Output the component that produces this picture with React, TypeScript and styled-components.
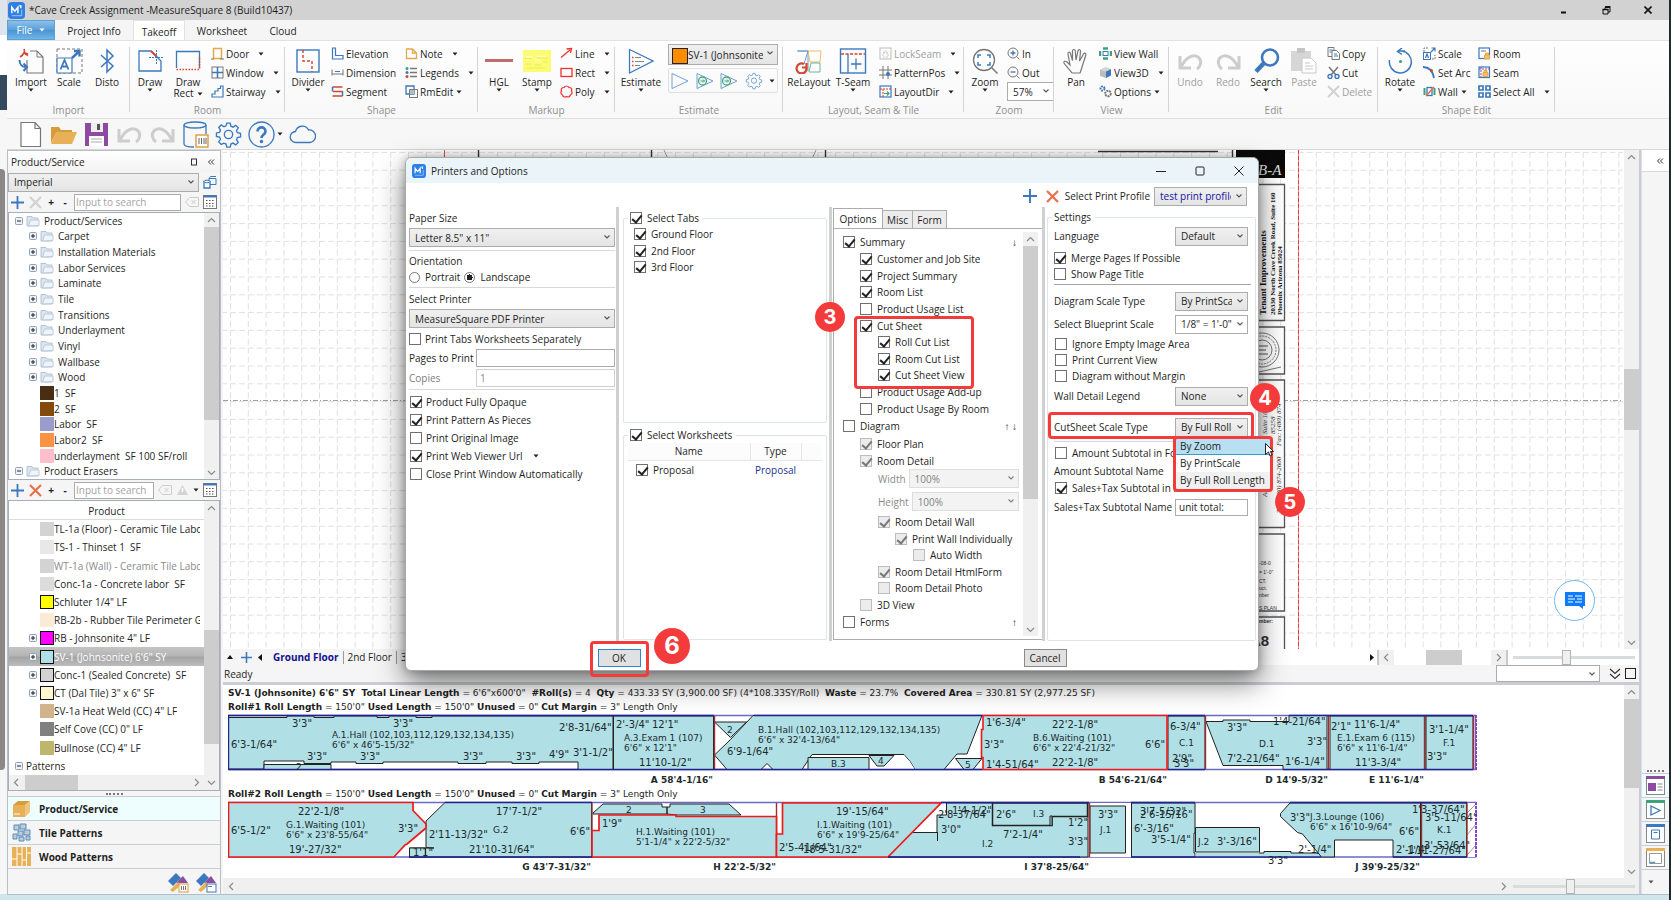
import React from 'react';
import styled, { createGlobalStyle, css } from 'styled-components';

const BLUE = '#3b78bd';
const RED = '#f43b3b';
const CUT = '#b0e0e6';

const GlobalStyle = createGlobalStyle`
  * { box-sizing: border-box; }
  body { margin: 0; background: #d0e6ec; }
  body, button, input, select, table {
    font-family: "Open Sans", "Noto Sans", sans-serif;
    font-size: 10px;
    line-height: 16px;
    color: #1e1e1e;
  }
  button { border: 0; padding: 0; background: none; white-space: nowrap; }
  svg { display: block; flex: none; }
`;

/* ---------- shell ---------- */

const Page = styled.div`
  position: relative;
  display: flex;
  height: 100vh;
  overflow: hidden;
`;
const Behind = styled.div`
  width: 7px;
  flex: none;
  display: flex;
  flex-direction: column;
  background: #f2f4f6;
`;
const BehindPart = styled.div<{ $h?: number; $c: string; $round?: boolean }>`
  ${p => (p.$h ? css`height: ${p.$h}px; flex: none;` : css`flex: 1;`)}
  background: ${p => p.$c};
  ${p => p.$round && css`margin-right: 2px; border-radius: 0 4px 4px 0;`}
`;
const AppWindow = styled.div`
  flex: 1;
  min-width: 0;
  display: flex;
  flex-direction: column;
  background: #f5f5f5;
  border-right: 2px solid #1d2a30;
`;
const TitleBar = styled.header`
  height: 20px;
  flex: none;
  display: flex;
  align-items: center;
  background: #d2d2d2;
  padding-left: 1px;
`;
const TitleText = styled.h1`
  margin: 0 0 0 4px;
  font-size: 10px;
  font-weight: 400;
  flex: 1;
`;
const WinButton = styled.button`
  width: 42px;
  height: 20px;
  display: flex;
  align-items: center;
  justify-content: center;
`;
const TabBar = styled.nav`
  height: 21px;
  flex: none;
  display: flex;
  align-items: flex-end;
  border-bottom: 1px solid #e2e2e2;
`;
const FileButton = styled.button`
  width: 48px;
  height: 20px;
  align-self: flex-start;
  display: flex;
  align-items: center;
  justify-content: center;
  gap: 7px;
  color: #fff;
  background: linear-gradient(#8cc0e8, #5b9fd8 50%, #4a94d4 52%, #6fb6e6);
  border: 1px solid #5fa0d4;
`;
const MenuTab = styled.button<{ $active?: boolean; $w: number }>`
  width: ${p => p.$w}px;
  height: 20px;
  padding-top: 2px;
  ${p => p.$active && css`
    background: #fff;
    border: 1px solid #e2e2e2;
    border-bottom: 0;
  `}
`;
const Ribbon = styled.div`
  height: 78px;
  flex: none;
  display: flex;
  background: linear-gradient(#fefefe, #f8f8f8);
  border-bottom: 1px solid #dedede;
`;
const Group = styled.section<{ $w: number; $pad: number }>`
  width: ${p => p.$w}px;
  flex: none;
  display: flex;
  flex-direction: column;
  padding: 3px 0 0 ${p => p.$pad}px;
  position: relative;
  &::after {
    content: "";
    position: absolute;
    right: 0;
    top: 6px;
    height: 65px;
    border-right: 1px solid #d4d4d4;
  }
`;
const GroupTools = styled.div`
  height: 58px;
  display: flex;
`;
const GroupLabel = styled.div<{ $pad: number }>`
  color: #8f8f8f;
  text-align: center;
  margin-left: -${p => p.$pad}px;
`;
const LargeButton = styled.button<{ $w?: number; $off?: boolean }>`
  width: ${p => p.$w ?? 38}px;
  height: 57px;
  display: flex;
  flex-direction: column;
  align-items: center;
  padding-top: 4px;
  line-height: 10px;
  color: ${p => (p.$off ? '#a0a0a0' : '#1e1e1e')};
  > svg:first-child { margin-bottom: 3px; }
`;
const LargeLabel = styled.span`
  display: block;
  line-height: 11px;
`;
const SmallColumn = styled.div<{ $w?: number }>`
  display: flex;
  flex-direction: column;
  margin-left: 4px;
  ${p => p.$w && css`width: ${p.$w - 4}px;`}
`;
const SmallButton = styled.button<{ $off?: boolean; $near?: boolean }>`
  height: 19px;
  display: flex;
  align-items: center;
  gap: 2px;
  color: ${p => (p.$off ? '#a0a0a0' : '#1e1e1e')};
  > svg + span + svg { margin-left: ${p => (p.$near ? 1 : 7)}px; }
`;
const EstimateColumn = styled.div`
  width: 110px;
  margin-left: 8px;
  display: flex;
  flex-direction: column;
  gap: 3px;
`;
const EstimateTools = styled.div`
  height: 25px;
  display: flex;
  align-items: center;
  justify-content: space-between;
  padding: 0 2px;
  border: 1px solid #e0e0e0;
  border-radius: 2px;
`;
const QuickBar = styled.div`
  height: 31px;
  flex: none;
  display: flex;
  align-items: center;
  gap: 6px;
  padding-left: 10px;
  background: #f7f7f7;
  border-bottom: 1px solid #d8d8d8;
`;
const HelpMenu = styled.button`
  display: flex;
  align-items: center;
  gap: 2px;
`;
const Main = styled.main`
  flex: 1;
  min-height: 0;
  display: flex;
`;
const BottomEdge = styled.footer`
  height: 6px;
  flex: none;
  background: #d0e6ec;
  border-top: 1px solid #aebfc6;
`;

/* ---------- generic controls ---------- */

const SelectWrap = styled.span<{ $w?: number; $h?: number; $white?: boolean; $off?: boolean }>`
  position: relative;
  display: block;
  flex: none;
  width: ${p => (p.$w ? p.$w + 'px' : '100%')};
  height: ${p => p.$h ?? 19}px;
  opacity: ${p => (p.$off ? 0.75 : 1)};
  select {
    width: 100%;
    height: 100%;
    appearance: none;
    border: 1px solid ${p => (p.$off ? '#d2d2d2' : '#acacac')};
    border-radius: 0;
    padding: 0 15px 0 5px;
    background: ${p => (p.$white ? '#fff' : p.$off ? '#efefef' : 'linear-gradient(#f0f0f0, #e4e4e4)')};
    overflow: hidden;
    opacity: 1;
    color: ${p => (p.$off ? '#555' : '#1e1e1e')};
  }
  svg { position: absolute; right: 4px; top: 5px; pointer-events: none; }
`;
const ProfileWrap = styled(SelectWrap)`
  select { color: #1414a0; }
`;
const SwatchWrap = styled(SelectWrap)`
  select { padding-left: 19px; padding-right: 14px; }
  &::before {
    content: "";
    position: absolute;
    left: 4px;
    top: 4px;
    width: 14px;
    height: 14px;
    background: #ff8c00;
    border: 1px solid #222;
  }
`;
const Chevron = ({ c = '#555' }: { c?: string }) => (
  <svg width="8" height="8" viewBox="0 0 8 8"><path d="M1.5 2.5 4 5l2.5-2.5" fill="none" stroke={c} strokeWidth="1.1" /></svg>
);
type DropProps = { label: string; value: string; w?: number; h?: number; white?: boolean; off?: boolean; id?: string };
const Drop = ({ label, value, w, h, white, off, id }: DropProps) => (
  <SelectWrap $w={w} $h={h} $white={white} $off={off}>
    <select id={id} aria-label={label} disabled={off} defaultValue={value}><option>{value}</option></select>
    <Chevron />
  </SelectWrap>
);
const TextBox = styled.input<{ $w?: number; $h?: number }>`
  width: ${p => (p.$w ? p.$w + 'px' : 'auto')};
  height: ${p => p.$h ?? 17}px;
  min-width: 0;
  border: 1px solid #acacac;
  background: #fff;
  padding: 0 3px;
  outline: 0;
  &:disabled { border-color: #cfcfcf; color: #8a8a8a; }
  &::placeholder { color: #a3a3a3; }
`;
const SearchBox = styled(TextBox)`
  flex: 1;
  padding: 0 1px;
`;
const CheckLabel = styled.label<{ $indent?: number; $h?: number; $gap?: number }>`
  display: flex;
  align-items: center;
  gap: ${p => p.$gap ?? 4}px;
  height: ${p => p.$h ?? 16}px;
  padding-left: ${p => p.$indent ?? 0}px;
  white-space: nowrap;
`;
const CheckInput = styled.input`
  appearance: none;
  flex: none;
  width: 12px;
  height: 12px;
  margin: 0;
  border: 1px solid #707070;
  background: #fff;
  position: relative;
  &:checked::after {
    content: "";
    position: absolute;
    left: 3px;
    top: 0;
    width: 4px;
    height: 8px;
    border: solid #222;
    border-width: 0 2px 2px 0;
    transform: rotate(40deg);
  }
  &:disabled { border-color: #bcbcbc; background: #ececec; }
  &:disabled:checked::after { border-color: #777; }
`;
const RadioInput = styled.input`
  appearance: none;
  width: 11px;
  height: 11px;
  margin: 0;
  border: 1px solid #777;
  border-radius: 50%;
  background: #fff;
  &:checked { background: radial-gradient(circle, #222 0 3px, #fff 3px); }
`;
type CheckProps = { text: string; on?: boolean; off?: boolean; indent?: number; h?: number; gap?: number };
const Check = ({ text, on, off, indent, h, gap }: CheckProps) => (
  <CheckLabel $indent={indent} $h={h} $gap={gap}>
    <CheckInput type="checkbox" defaultChecked={on} disabled={off} />
    {text}
  </CheckLabel>
);

const Bar = styled.div<{ $horizontal?: boolean }>`
  flex: none;
  display: flex;
  flex-direction: ${p => (p.$horizontal ? 'row' : 'column')};
  align-items: center;
  ${p => (p.$horizontal ? css`height: 15px;` : css`width: 15px;`)}
  background: #f0f0f0;
`;
const BarArrow = styled.button`
  flex: none;
  width: 15px;
  height: 14px;
  display: flex;
  align-items: center;
  justify-content: center;
`;
const Gap = styled.div<{ $grow: number }>`flex: ${p => p.$grow} 1 0;`;
const Thumb = styled.div<{ $grow: number }>`
  flex: ${p => p.$grow} 1 0;
  align-self: stretch;
  background: #cdcdcd;
`;
const ARROWS = { up: 'M1 6 4.5 2.5 8 6', down: 'M1 3 4.5 6.500 8 3', left: 'M6 1 2.5 4.500 6 8', right: 'M3 1 6.500 4.500 3 8' };
const Arrow = ({ dir }: { dir: keyof typeof ARROWS }) => (
  <svg width="9" height="9" viewBox="0 0 9 9"><path d={ARROWS[dir]} fill="none" stroke="#8a8a8a" strokeWidth="1.2" /></svg>
);
const ScrollBar = ({ before, size, after, horizontal }: { before: number; size: number; after: number; horizontal?: boolean }) => (
  <Bar $horizontal={horizontal}>
    <BarArrow aria-label="Scroll back"><Arrow dir={horizontal ? 'left' : 'up'} /></BarArrow>
    {before > 0 && <Gap $grow={before} />}
    <Thumb $grow={size} />
    <Gap $grow={after} />
    <BarArrow aria-label="Scroll forward"><Arrow dir={horizontal ? 'right' : 'down'} /></BarArrow>
  </Bar>
);
const Slider = styled.input`
  appearance: none;
  width: 122px;
  height: 16px;
  margin: 0 4px 0 5px;
  background: linear-gradient(#d8dcdc, #d8dcdc) center / 100% 3px no-repeat;
  &::-webkit-slider-thumb {
    appearance: none;
    width: 9px;
    height: 15px;
    background: #f0f0f0;
    border: 1px solid #b4b4b4;
  }
`;
const Tri = ({ c = '#222' }: { c?: string }) => (
  <svg width="6" height="4" viewBox="0 0 6 4"><path d="M.5.5h5L3 3.500z" fill={c} /></svg>
);

/* ---------- icons ---------- */

const S = ({ w, h = w, vb, children }: { w: number; h?: number; vb?: string; children: React.ReactNode }) => (
  <svg width={w} height={h} viewBox={vb ?? `0 0 ${w} ${h}`} fill="none">{children}</svg>
);
const GEAR = 'M10.300 2h3.400l.6 3 2.100.9 2.600-1.700 2.400 2.400-1.700 2.600.9 2.100 3 .6v3.400l-3 .6-.9 2.100 1.700 2.600-2.400 2.400-2.600-1.700-2.100.9-.6 3h-3.400l-.6-3-2.100-.9L5 22.600l-2.400-2.400 1.700-2.600-.9-2.100-3-.6v-3.400l3-.6.9-2.100L2.600 6.200 5 3.800l2.600 1.700 2.100-.9z';
const Logo = ({ s = 17 }: { s?: number }) => (
  <S w={s} vb="0 0 18 18">
    <rect width="18" height="18" rx="4" fill="#2f7fe4" />
    <path d="M4 12V5.500l3.300 4.300L10.500 5.500V12M12 4h1.500v2.500" stroke="#fff" strokeWidth="1.500" />
    <path d="M4 14.500h10.500V8" stroke="#bcd9fb" strokeWidth=".8" />
  </S>
);
const Big: Record<string, React.ReactNode> = {
  import: <S w={26}><path d="M9 12v13h16V9l-6-6h-7" stroke="#777" strokeWidth="1.200" /><path d="M19 3v6h6" stroke="#777" /><path d="M6 1c1.500 3-1 6-4 8M4.500 6c2-1 4-1 5.500 0M6 4c1 2 2 3 4 3.500" stroke="#d2452f" strokeWidth="1.600" /><path d="M1.500 12c0 4 2.500 7 6.500 7M5.500 15.500 9 19l-3.500 4" stroke={BLUE} strokeWidth="2" /></S>,
  scale: <S w={27} h={26}><rect x="1" y="1" width="25" height="24" stroke="#777" strokeDasharray="3 2" /><path d="M1 10h15v15H1z" fill="#fff" stroke={BLUE} strokeWidth="1.200" /><path d="M4.500 21.500 8.500 12l4 9.500M6 18.500h5" stroke={BLUE} strokeWidth="1.800" /><path d="m16 10 7-6.500M18 3h5.500v5.500" stroke={BLUE} strokeWidth="2.400" /></S>,
  disto: <S w={16} h={26}><path d="m2 7 12 11-6 6V2l6 6L2 19" stroke={BLUE} strokeWidth="1.500" /></S>,
  draw: <S w={27} h={26}><path d="M14 3H2v20h22V13z" stroke={BLUE} strokeWidth="1.300" /><path d="m14 3 6 6" stroke="#d2452f" strokeWidth="1.800" /><path d="M19.500 2v14M12 9.500h15" stroke={BLUE} strokeDasharray="2 1" /></S>,
  rect: <S w={26}><path d="M1.500 20V3.500h23V20" stroke={BLUE} strokeWidth="1.300" /><path d="M1.500 21.500h23V8" stroke="#d2452f" strokeDasharray="1.500 1.500" strokeWidth="1.500" /></S>,
  divider: <S w={26}><rect x="2" y="2" width="22" height="22" stroke={BLUE} strokeWidth="1.400" /><path d="M8 2v11h9v11" stroke="#d2452f" strokeDasharray="3 2" strokeWidth="1.400" /></S>,
  hgl: <S w={28} h={26}><path d="M0 12.500h28" stroke="#c26a6a" strokeWidth="3" /></S>,
  stamp: <S w={28} h={26}><rect y="2" width="28" height="22" fill="#fcfc74" /><path d="M3 9h6M14 8.500h9M3 12h3M12 12h5" stroke="#ffffc8" strokeWidth="1.500" /><path d="M2 10.500h7M14 10h11M3 16h5M12 17h6M20 14h5M4 20h18" stroke="#ecec4c" strokeWidth="1.200" /></S>,
  estimate: <S w={26}><path d="M1.500 1.500 25 13 1.500 25z" stroke={BLUE} strokeWidth="1.200" /><path d="M4 9.500h1.500M4 13.500h1.500M4 17.500h1.500" stroke="#d2452f" strokeWidth="1.400" /><path d="M7 9.500h6M7 13.500h9M7 17.500h5" stroke="#888" strokeWidth="1.200" /></S>,
  relayout: <S w={28} h={26}><path d="M3 3h10v20" stroke="#6d9ccb" /><path d="M13 3h13l-1 11H15z" stroke="#eebb6c" /><path d="M16 15h9v9H14z" stroke="#6db58f" /><path d="M2 3h11L9 16" stroke="#6d9ccb" /><path d="M11.500 19.500A5 5 0 1 1 9 16M11.500 15v4.500H7" stroke="#d2452f" strokeWidth="2.200" /></S>,
  tseam: <S w={28} h={26}><rect x="1.500" y="1" width="25" height="24" stroke={BLUE} strokeWidth="1.400" /><path d="M2 6h24" stroke="#d2452f" strokeDasharray="3 1.500" strokeWidth="1.600" /><path d="M9 6v19M17 10.500v11M12 16h10.500" stroke={BLUE} strokeWidth="1.300" /></S>,
  zoom: <S w={26}><circle cx="12" cy="12" r="10.500" stroke="#777" strokeWidth="1.300" /><path d="m19.500 19.500 6 6" stroke="#777" strokeWidth="1.500" /><path d="M6 10V7h3M15 7h3v3M18 14v3h-3M9 17H6v-3" stroke={BLUE} strokeWidth="1.500" /></S>,
  pan: <S w={26}><path d="M9 25c-2-3-7-8-8-10-.6-1.500 1.500-2.500 3-1l3 3L5 6c-.3-2 2-2.500 2.500-.5l2 7L9.500 3c0-2 2.700-2 2.800 0l.7 9L15 3c.3-2 2.800-1.500 2.500.5L16.500 13l4-7c1-1.700 3-.6 2.300 1.200L19 19c-.5 2-1 4-2 6z" stroke="#777" strokeWidth="1.200" /></S>,
  undo: <S w={27} h={26}><path d="M3 8v12h11M4 19C8 11 15 5 21 9c5 4 2 10-1 12" stroke="#cdcdcd" strokeWidth="3" /></S>,
  redo: <S w={27} h={26}><path d="M24 8v12H13M23 19C19 11 12 5 6 9c-5 4-2 10 1 12" stroke="#cdcdcd" strokeWidth="3" /></S>,
  search: <S w={27} h={26}><circle cx="17" cy="9.500" r="8" stroke={BLUE} strokeWidth="2.600" /><path d="M11 15 3 23.500" stroke={BLUE} strokeWidth="4.500" /></S>,
  paste: <S w={28} h={26}><path d="M1 3h20v20H1z" fill="#d6d6d6" /><path d="M7 0h8v5H7z" fill="#c4c4c4" /><path d="M12 10h9l5 5v10H12z" fill="#fff" stroke="#c8c8c8" /><path d="M15 15h5M15 18h8M15 21h8" stroke="#c8c8c8" /></S>,
  rotate: <S w={27} h={26}><path d="M2.500 12A11 11 0 1 0 15 3M11 3h7M15 0l-4.500 3.500L15 6.500" stroke={BLUE} strokeWidth="1.500" /><circle cx="13.500" cy="13.500" r="1.600" fill="#3fa37a" /></S>,
};
const G = '#777';
const Small: Record<string, React.ReactNode> = {
  door: <><path d="M2.500 1.500h8v10h-8z" stroke="#e3a850" strokeWidth="1.500" /><path d="M0 12h3M9 12h4" stroke={G} /></>,
  window: <><rect x="1" y="1" width="11" height="11" stroke={G} /><path d="M6.500 1v11M1 6.500h11" stroke={BLUE} strokeWidth="1.500" /></>,
  stair: <path d="M1 12V9h3V6h3V3.500h2.500V1H12v11z" stroke={BLUE} strokeWidth="1.200" />,
  elev: <path d="M1.500 1h3v7.500H12V12H1.500z" stroke={BLUE} strokeWidth="1.200" />,
  dim: <><path d="M1 3.500v6M12 3.500v6M1 8h11" stroke={G} /><path d="M4 5.500h5" stroke={BLUE} /></>,
  seg: <><path d="M1.500 2h10M11.500 11h-10M2 6.500h10" stroke="#d2452f" strokeWidth="1.500" /><path d="M1.500 2v4.500M11.500 6.500V11" stroke={BLUE} strokeWidth="1.500" /></>,
  note: <path d="M1.500 2h6l4 4v5.500h-10zM7.500 2v4h4" stroke="#e3a850" strokeWidth="1.300" />,
  legends: <><circle cx="2" cy="2.500" r="1.500" fill="#3fa37a" /><circle cx="2" cy="6.500" r="1.500" fill={BLUE} /><circle cx="2" cy="10.500" r="1.500" fill="#d2452f" /><path d="M5 2.500h7M5 6.500h7M5 10.500h7" stroke={G} strokeWidth="1.500" /></>,
  rmedit: <><path d="M1 1h8v8H1z" stroke={BLUE} strokeWidth="1.300" /><path d="M4.500 4.500h8v8h-8z" stroke={G} /><path d="M5 5h4v4H5z" fill="#bbb" /></>,
  line: <path d="m1 10.500 9-7.500M6.500 2l5-.5-1 4.500" stroke="#f03030" strokeWidth="1.300" />,
  rrect: <rect x="1" y="2.500" width="11" height="8" stroke="#f03030" strokeWidth="1.300" />,
  poly: <path d="M4 2.500Q6.500-.5 9 2.500q3.500 0 2.500 3.500 1.500 2.500-1 4-1.500 3-4 1.500-3 1.500-4-1.500-2.500-1.500-1-4Q.5 2.500 4 2.500z" stroke="#f03030" strokeWidth="1.200" />,
  lock: <><rect x="1" y="1" width="11" height="11" stroke="#bbb" /><path d="M4 6h5v4H4zM5 6V4h3v2" stroke="#c6c6c6" strokeDasharray="2 1" /></>,
  pattern: <><path d="M4 0v13M9 0v13M0 4h13M0 9h13" stroke={G} /><circle cx="9" cy="8" r="2" fill={BLUE} /></>,
  layout: <><rect x="1" y="1" width="11" height="11" stroke={BLUE} strokeWidth="1.200" /><path d="M1 4h11M4 4v8" stroke="#d2452f" strokeDasharray="2 1" /><path d="M5 8.500h5M8 6.500l2 2-2 2" stroke="#3fa37a" strokeWidth="1.200" /></>,
  zin: <><circle cx="6" cy="6" r="5" stroke={G} /><path d="m9.500 9.500 3 3" stroke={G} /><path d="M6 3.500v5M3.500 6h5" stroke={BLUE} strokeWidth="1.300" /></>,
  zout: <><circle cx="6" cy="6" r="5" stroke={G} /><path d="m9.500 9.500 3 3" stroke={G} /><path d="M3.500 6h5" stroke={BLUE} strokeWidth="1.300" /></>,
  vwall: <><path d="M4 1.500h5M4 11.500h5M1 4v5M12 4v5" stroke="#3fa37a" strokeWidth="2.400" /><rect x="4" y="4.500" width="5" height="4" stroke={BLUE} /></>,
  cube: <><path d="M1 3.500 7 1l5 2-5 2.500z" fill="#d5d5d5" /><path d="m1 3.500 6 2V12L1 10z" fill="#bcbcbc" /><path d="m7 5.500 5-2.500v6.500L7 12z" fill={BLUE} /></>,
  gears: <><circle cx="3.500" cy="3.500" r="2" stroke={BLUE} strokeWidth="2" strokeDasharray="1.600 .8" /><circle cx="9" cy="8.500" r="2.800" stroke={G} strokeWidth="2" strokeDasharray="2 .8" /></>,
  copy: <><path d="M1 .5h6v9H1z" stroke={G} /><path d="M5 3.500h4.500l3 3V12.500H5z" fill="#fff" stroke={G} /><path d="M7 7h3M7 9h4M2.500 3h3M2.500 5h2" stroke={BLUE} /></>,
  cut: <><path d="m2 1 7 8M11 1 4 9" stroke={G} strokeWidth="1.500" /><circle cx="3" cy="10.500" r="2" stroke={BLUE} strokeWidth="1.400" /><circle cx="10" cy="10.500" r="2" stroke={BLUE} strokeWidth="1.400" /></>,
  del: <path d="m1 1 11 11M12 1 1 12" stroke="#d0d0d0" strokeWidth="2" />,
  sscale: <><path d="M1 5V1h4M9 12h3V8" stroke={G} strokeDasharray="2 1" /><rect x=".5" y="5.500" width="7" height="7" stroke={BLUE} /><path d="m2.500 11 1.500-4 1.500 4M8 5l4-4M8.500 1H12v3.500" stroke={BLUE} strokeWidth="1.200" /></>,
  arc: <><path d="M0 1q9 0 11 11" stroke={BLUE} strokeWidth="1.800" /><circle cx="8.500" cy="4.500" r="1.500" fill="#d2452f" /></>,
  wall: <><path d="M1.500 3v7M11.500 3v7" stroke="#3fa37a" strokeWidth="2" /><rect x="4" y="2.500" width="5" height="8" stroke={BLUE} strokeWidth="1.300" /><path d="m3 11 8-9" stroke="#e8714a" strokeWidth="1.500" /></>,
  room: <><rect x="1" y="1" width="10.500" height="10.500" stroke={BLUE} strokeWidth="1.200" /><path d="M3 4h5" stroke={G} /><path d="M6.500 8h5v4h-5zM7.500 8V6h3v2" fill="#f3c069" stroke="#e3a850" /></>,
  seam: <><rect x="1" y="1" width="10.500" height="10.500" stroke={BLUE} strokeWidth="1.200" /><path d="M3 1v11M1 3h11" stroke="#8d4fa0" strokeDasharray="2 1" /><path d="M5 6.500h5v4H5zM6 6.500v-2h3v2" fill="#f3c069" stroke="#e3a850" /></>,
  all: <path d="M1 1h4v4H1zM8 1h4v4H8zM1 8h4v4H1zM8 8h4v4H8z" stroke={BLUE} strokeWidth="1.700" />,
};
const Sm = ({ n, t, arrow, near, off }: { n: string; t: string; arrow?: boolean; near?: boolean; off?: boolean }) => (
  <SmallButton $off={off} $near={near}>
    <S w={13}>{Small[n]}</S><span>{t}</span>{arrow && <Tri />}
  </SmallButton>
);
const Lg = ({ n, t, arrow, w, off }: { n: string; t: string; arrow?: boolean; w?: number; off?: boolean }) => (
  <LargeButton $w={w} $off={off}>{Big[n]}<LargeLabel>{t}</LargeLabel>{arrow && <Tri />}</LargeButton>
);
const RibbonGroup = ({ t, w, pad, children }: { t: string; w: number; pad: number; children: React.ReactNode }) => (
  <Group $w={w} $pad={pad}><GroupTools>{children}</GroupTools><GroupLabel $pad={pad}>{t}</GroupLabel></Group>
);
const TwoLine = styled.span`
  line-height: 11px;
  display: flex;
  align-items: center;
  gap: 3px;
`;
const PlayTri = ({ plus }: { plus?: boolean }) => (
  <S w={18}><path d="M1 1.500 17 9 1 16.500z" stroke="#6fa1d6" />{plus && <><circle cx="6.500" cy="9" r="4" fill="#e9f5ef" stroke="#4aa57c" strokeWidth="1.300" /><path d="M4.500 9h4M7 7.500 8.500 9 7 10.500" stroke="#4aa57c" /></>}</S>
);

/* ---------- product panel ---------- */

const SidePanel = styled.aside`
  width: 214px;
  flex: none;
  display: flex;
  flex-direction: column;
  border: 1px solid #b9bdc7;
  border-bottom: 0;
`;
const PanelHead = styled.div`
  height: 21px;
  flex: none;
  display: flex;
  align-items: center;
  gap: 9px;
  padding: 0 5px 0 3px;
  background: linear-gradient(#fff, #f2f2f2);
  > span { flex: 1; }
`;
const UnitRow = styled.div`
  height: 20px;
  flex: none;
  display: flex;
  align-items: center;
  gap: 4px;
  padding-right: 3px;
  ${SelectWrap} { flex: 1; }
`;
const ToolRow = styled.div`
  height: 20px;
  flex: none;
  display: flex;
  align-items: center;
  gap: 4px;
  padding: 0 3px 0 2px;
`;
const TinyButton = styled.button<{ $w?: number; $bold?: boolean }>`
  width: ${p => p.$w ?? 14}px;
  display: flex;
  justify-content: center;
  font-weight: ${p => (p.$bold ? 700 : 400)};
`;
const TreeBox = styled.div<{ $h?: number }>`
  display: flex;
  border: 1px solid #a9adba;
  background: #fff;
  min-height: 0;
  ${p => (p.$h ? css`height: ${p.$h}px; flex: none;` : css`flex: 1;`)}
`;
const TreeMain = styled.div`
  flex: 1;
  min-width: 0;
  display: flex;
  flex-direction: column;
`;
const TreeRows = styled.ul`
  flex: 1;
  min-width: 0;
  margin: 0;
  padding: 0;
  list-style: none;
  display: grid;
  grid-template-columns: minmax(0, 1fr);
  grid-auto-rows: 1fr;
`;
const TreeRow = styled.li<{ $indent: number; $sel?: boolean; $dim?: boolean }>`
  display: flex;
  align-items: center;
  min-height: 0;
  padding: 0 4px 0 ${p => p.$indent}px;
  white-space: pre;
  color: ${p => (p.$sel ? '#fff' : p.$dim ? '#8a8a8a' : '#1e1e1e')};
  ${p => p.$sel && css`background: linear-gradient(#c4c4c4, #b4b4b4 48%, #a4a4a4 52%, #bcbcbc);`}
`;
const TreeText = styled.span`
  flex: 1;
  min-width: 0;
  overflow: hidden;
`;
const Expander = styled.span`
  width: 11px;
  flex: none;
`;
const Swatch = styled.span<{ $c: string; $line?: boolean }>`
  width: 14px;
  height: 14px;
  flex: none;
  background: ${p => p.$c};
  border: 1px solid ${p => (p.$line ? '#111' : p.$c)};
`;
const FolderSlot = styled.span`
  width: 18px;
  flex: none;
`;
const ColumnHead = styled.div`
  height: 19px;
  flex: none;
  padding-top: 2px;
  text-align: center;
  border-bottom: 1px solid #dcdcdc;
`;
const Grip = styled.div`
  height: 5px;
  flex: none;
  display: flex;
  align-items: center;
  justify-content: center;
  color: #777;
  &::after { content: ""; width: 17px; border-top: 2px dotted #777; }
`;
const NavItem = styled.button<{ $active?: boolean }>`
  height: 24px;
  flex: none;
  display: flex;
  align-items: center;
  gap: 8px;
  padding-left: 4px;
  font-weight: 700;
  background: ${p => (p.$active ? '#eefdfe' : '#f5f5f5')};
  border-top: 1px solid #c9ccd4;
`;
const NavFoot = styled.div`
  height: 26px;
  flex: none;
  display: flex;
  align-items: center;
  justify-content: flex-end;
  gap: 6px;
  padding-right: 3px;
  border-top: 1px solid #c9ccd4;
`;
const PlusMinus = ({ open }: { open?: boolean }) => (
  <S w={8}><rect x=".5" y=".5" width="7" height="7" rx="1" fill="#eef2f7" stroke="#8ea3ba" /><path d={open ? 'M2 4h4' : 'M2 4h4M4 2v4'} stroke="#222" /></S>
);
const Folder = () => (
  <S w={14}><path d="M1 12V2.500h5l1 1.500h5V12z" fill="#dbe6f1" stroke="#b3c3d3" /><path d="M2.500 12 4.500 6H13v5.500z" fill="#eef4fa" stroke="#bccadb" /></S>
);
const Plus = ({ s = 13 }: { s?: number }) => <S w={s} vb="0 0 13 13"><path d="M6.500 0v13M0 6.500h13" stroke={BLUE} strokeWidth="1.800" /></S>;
const Cross = ({ c, s = 13 }: { c: string; s?: number }) => <S w={s} vb="0 0 13 13"><path d="m1 1 11 11M12 1 1 12" stroke={c} strokeWidth="2.200" /></S>;
const GridIcon = () => (
  <S w={14}><rect x=".5" y=".5" width="13" height="13" fill="#fff" stroke="#777" /><path d="M1 1.500h12" stroke={BLUE} strokeWidth="2" /><path d="M3 5.500h8M3 8.500h8M3 11h8" stroke="#555" strokeWidth="1.200" strokeDasharray="1.500 1.500" /></S>
);
const Clear = () => <S w={14} h={10}><path d="M4.500.5h9v9h-9L.5 5zM6.500 3l4 4M10.500 3l-4 4" stroke="#ccc" /></S>;

type Row = { t: string; lvl: number; exp?: 'open' | 'closed'; c?: string; line?: boolean; sel?: boolean; dim?: boolean; folder?: boolean };
const folders = ['Carpet', 'Installation Materials', 'Labor Services', 'Laminate', 'Tile', 'Transitions', 'Underlayment', 'Vinyl', 'Wallbase', 'Wood'];
const catalog: Row[] = [
  { t: 'Product/Services', lvl: 0, exp: 'open', folder: true },
  ...folders.map(t => ({ t, lvl: 1, exp: 'closed' as const, folder: true })),
  { t: '1  SF', lvl: 1, c: '#4a2e14' },
  { t: '2  SF', lvl: 1, c: '#84490c' },
  { t: 'Labor  SF', lvl: 1, c: '#9a9ccc' },
  { t: 'Labor2  SF', lvl: 1, c: '#fa9344' },
  { t: 'underlayment  SF 100 SF/roll', lvl: 1, c: '#ffbecb' },
  { t: 'Product Erasers', lvl: 0, exp: 'open', folder: true },
];
const products: Row[] = [
  { t: 'TL-1a (Floor) - Ceramic Tile Labor', lvl: 1, c: '#d3d3d3' },
  { t: 'TS-1 - Thinset 1  SF', lvl: 1, c: '#e8e8e8' },
  { t: 'WT-1a (Wall) - Ceramic Tile Labor', lvl: 1, c: '#d3d3d3', dim: true },
  { t: 'Conc-1a - Concrete labor  SF', lvl: 1, c: '#dcdcdc' },
  { t: 'Schluter 1/4" LF', lvl: 1, c: '#ffff00', line: true },
  { t: 'RB-2b - Rubber Tile Perimeter G', lvl: 1, c: '#faebd7' },
  { t: 'RB - Johnsonite 4" LF', lvl: 1, exp: 'closed', c: '#ff00ff', line: true },
  { t: 'SV-1 (Johnsonite) 6\'6" SY', lvl: 1, exp: 'closed', c: CUT, line: true, sel: true },
  { t: 'Conc-1 (Sealed Concrete)  SF', lvl: 1, exp: 'closed', c: '#d3d3d3', line: true },
  { t: 'CT (Dal Tile) 3" x 6" SF', lvl: 1, exp: 'closed', c: '#fff8d0', line: true },
  { t: 'SV-1a Heat Weld (CC) 4" LF', lvl: 1, c: '#d2b48c' },
  { t: 'Self Cove (CC) 0" LF', lvl: 1, c: '#808080' },
  { t: 'Bullnose (CC) 4" LF', lvl: 1, c: '#bdb76b' },
  { t: 'Patterns', lvl: 0, exp: 'open' },
];
const Rows = ({ rows }: { rows: Row[] }) => (
  <TreeRows>
    {rows.map(r => (
      <TreeRow key={r.t} $indent={r.lvl ? 20 : 6} $sel={r.sel} $dim={r.dim}>
        <Expander>{r.exp && <PlusMinus open={r.exp === 'open'} />}</Expander>
        {r.folder && <FolderSlot><Folder /></FolderSlot>}
        {r.c && <Swatch $c={r.c} $line={r.line} />}
        <TreeText>{r.t}</TreeText>
      </TreeRow>
    ))}
  </TreeRows>
);
const BrushIcon = ({ doc }: { doc?: boolean }) => (
  <S w={22}><path d="m1 10 8-8 5 5-8 8z" fill={BLUE} /><path d="m9 12 7-7 5 7z" fill="#8a4fa0" /><path d="m3 19 8-8 3 3-8 7z" fill="#e8b057" /><rect x="12" y="13" width="9" height="8" fill="#fff" stroke={doc ? BLUE : '#d99c3d'} /><path d={doc ? 'M13 15.500h4' : 'M14.500 15v4M16.500 15v4M18.500 15v4'} stroke="#777" /></S>
);

const ProductPanel = () => (
  <SidePanel>
    <PanelHead><span>Product/Service</span><S w={8}><rect x="1.500" y="1" width="5" height="6" stroke="#333" /></S><S w={8}><path d="M4 1.500 1.500 4 4 6.500M7 1.500 4.500 4 7 6.500" stroke="#333" /></S></PanelHead>
    <UnitRow>
      <Drop label="Units" value="Imperial" />
      <S w={14}><path d="M6 3.500h7v6H6zM6 3.500l1.500-2h5.500" stroke={BLUE} /><path d="M1 6.500h6V13H1z" fill="#fff" stroke={BLUE} strokeWidth="1.300" /><ellipse cx="4" cy="6.500" rx="3" ry="1.300" fill="#fff" stroke={BLUE} /></S>
    </UnitRow>
    <ToolRow>
      <TinyButton aria-label="Add"><Plus /></TinyButton><TinyButton aria-label="Delete"><Cross c="#d2d2d2" /></TinyButton>
      <TinyButton $w={10} $bold>+</TinyButton><TinyButton $w={10} $bold>-</TinyButton>
      <SearchBox placeholder="Input to search" aria-label="Search products" />
      <Clear /><GridIcon />
    </ToolRow>
    <TreeBox $h={268}><Rows rows={catalog} /><ScrollBar before={0} size={192} after={45} /></TreeBox>
    <ToolRow>
      <TinyButton aria-label="Add"><Plus /></TinyButton><TinyButton aria-label="Delete"><Cross c="#e8714a" /></TinyButton>
      <TinyButton $w={10} $bold>+</TinyButton><TinyButton $w={10} $bold>-</TinyButton>
      <SearchBox placeholder="Input to search" aria-label="Search used products" />
      <Clear /><S w={13} h={12}><path d="M6.500 1 12 11H1z" fill="#d5d5d5" /><path d="M6.500 4v4" stroke="#fff" strokeWidth="1.500" /></S><Tri /><GridIcon />
    </ToolRow>
    <TreeBox>
      <TreeMain>
        <ColumnHead>Product</ColumnHead>
        <Rows rows={products} />
        <ScrollBar horizontal before={1} size={53} after={112} />
      </TreeMain>
      <ScrollBar before={101} size={100} after={28} />
    </TreeBox>
    <Grip />
    <NavItem $active><S w={19}><path d="M1 6h12v12H1z" fill="#e8b057" /><path d="m1 6 5-4h12l-5 4z" fill="#d99c3d" /><path d="m13 6 5-4v11l-5 5z" fill="#f0c47c" /><path d="M3 14v2M5 14v2M7 14v2" stroke="#fff" /></S>Product/Service</NavItem>
    <NavItem><S w={19}><path d="M2 2h5v5H2zM8 1h6v5H8zM12 7h6v5h-6zM6 8h5v5H6zM1 11h4v5H1zM7 14h5v4H7zM14 13h4v4h-4z" fill="#c9c9c9" stroke="#4c8fc7" /></S>Tile Patterns</NavItem>
    <NavItem><S w={19}><path d="M0 0h19v19H0z" fill="#e8b057" /><path d="M5 0v19M10 0v19M14.500 0v19M0 12h5M5 7h5M10 13h4M14.500 6H19" stroke="#fff" /></S>Wood Patterns</NavItem>
    <NavFoot><BrushIcon /><BrushIcon doc /></NavFoot>
  </SidePanel>
);

/* ---------- drawing canvas ---------- */

const Center = styled.section`
  flex: 1;
  min-width: 0;
  margin-left: 2px;
  display: flex;
  flex-direction: column;
  border-right: 2px solid #c9ccd2;
`;
const CanvasRow = styled.div`
  flex: 1;
  min-height: 0;
  display: flex;
  background: #fff;
`;
const CanvasView = styled.div`
  flex: 1;
  min-width: 0;
  overflow: hidden;
  position: relative;
`;
const ChatButton = styled.button`
  position: absolute;
  right: 29px;
  bottom: 28px;
  width: 41px;
  height: 41px;
  border-radius: 50%;
  border: 1px solid #6db9ee;
  background: #fff;
  display: flex;
  align-items: center;
  justify-content: center;
`;
const FloorRow = styled.div`
  height: 16px;
  flex: none;
  display: flex;
  align-items: center;
  background: #fff;
`;
const FloorTabs = styled.div`
  align-self: stretch;
  display: flex;
  align-items: center;
  background: #f5f5f5;
`;
const FloorIcons = styled.div`
  width: 44px;
  display: flex;
  align-items: center;
  justify-content: space-between;
  padding: 0 5px 0 4px;
`;
const FloorTab = styled.button<{ $active?: boolean }>`
  height: 13px;
  line-height: 13px;
  padding: 0 4px;
  border-right: 1px solid #9a9a9a;
  ${p => p.$active && css`color: #10108c; font-weight: 700; padding-left: 6px;`}
`;
const Fill = styled.div`flex: 1;`;
const PageScroll = styled.div`
  width: 131px;
  margin-left: 3px;
  border: solid #c9c9c9;
  border-width: 0 2px;
  ${Bar} { background: linear-gradient(90deg, #f0f0f0 15px, #fff 15px calc(100% - 15px), #f0f0f0 calc(100% - 15px)); }
`;
const StatusRow = styled.div`
  height: 20px;
  flex: none;
  display: flex;
  align-items: center;
  gap: 9px;
  padding: 0 3px 0 1px;
  background: #f5f5f5;
  border-bottom: 3px solid #c9ccd2;
`;
const StatusIcons = styled.div`
  display: flex;
  align-items: center;
  gap: 4px;
`;
const CutRow = styled.div`
  height: 193px;
  flex: none;
  display: flex;
  background: #fff;
`;
const CutSheets = styled.div`
  flex: 1;
  min-width: 0;
  overflow: hidden;
  padding-left: 5px;
  font-family: "DejaVu Sans", sans-serif;
  font-size: 9px;
`;
const CutLine = styled.p<{ $top?: number }>`
  margin: ${p => p.$top ?? 0}px 0 0;
  line-height: 14px;
  white-space: pre;
`;
const CutFoot = styled.div`
  height: 16px;
  flex: none;
  display: flex;
  align-items: center;
  background: #f0f0f0;
  padding-left: 4px;
`;

const GridCanvas = () => (
  <svg width="1400" height="500" viewBox="223 149 1400 500" fill="none">
    <defs>
      <pattern id="grid" x="230" y="168.700" width="17.800" height="17.800" patternUnits="userSpaceOnUse">
        <path d="M0 .5h17.800M.5 0v17.800" stroke="#e0e0e0" strokeDasharray="6 3" />
      </pattern>
    </defs>
    <rect x="223" y="149" width="1400" height="500" fill="url(#grid)" />
    <path d="M223 399.500h1400" stroke="#a0a0a0" strokeDasharray="5 2 1 2" />
    <path d="M444.500 149v20" stroke="#e34b4b" />
    <path d="M478.500 149v20M651.500 149v20M825.500 149v20M1232.500 149v20M1098 150.500h120" stroke="#333" strokeWidth="1.400" />
    <path d="M664 149q4 8 8 20M816 149q-4 8-8 20" stroke="#999" />
    <path d="M1298.500 149v500" stroke="#f48a8a" />
    <path d="M1298.500 149v500" stroke="#e83a3a" strokeDasharray="4 2" />
    <path d="M1236 149h49v28h-49z" fill="#0a0a0a" />
    <g fill="#fff" stroke="#555" strokeWidth="1.300">
      <path d="M1236 183.500h48.500v136h-48.500z" /><path d="M1236 326h48.500v47h-48.500z" /><path d="M1236 379h48.500v147.500h-48.500z" />
      <path d="M1236 533h48.500v77h-48.500z" /><path d="M1236 616h48.500v40h-48.500z" />
    </g>
    <text x="1258" y="174" fill="#ddd" fontFamily="Liberation Serif" fontStyle="italic" fontSize="15">B-A</text>
    <g fill="#111" fontFamily="Liberation Serif" fontWeight="700">
      <text transform="translate(1266 314) rotate(-90)" fontSize="9">Tenant Improvements</text>
      <text transform="translate(1275 314) rotate(-90)" fontSize="7">20330 North Cave Creek Road, Suite 160</text>
      <text transform="translate(1282 314) rotate(-90)" fontSize="7">Phoenix Arizona 85024</text>
    </g>
    <g stroke="#777"><circle cx="1262" cy="349" r="17" /><circle cx="1262" cy="349" r="14" strokeDasharray="2 1" /><circle cx="1262" cy="349" r="10" /><path d="M1259 345h9M1259 349h7M1259 353h9" stroke="#555" /><path d="m1259 371 22-5" /></g>
    <g fill="#333" fontFamily="Liberation Serif" fontStyle="italic" fontSize="7">
      <text transform="translate(1267 433) rotate(-90)">Suite 102</text>
      <text transform="translate(1275 433) rotate(-90)">85258</text>
      <text transform="translate(1281 445) rotate(-90)">Fax: (480) 874</text>
      <text transform="translate(1267 496) rotate(-90)">Arizona</text>
      <text transform="translate(1281 512) rotate(-90)">Tel: (480) 874-2600</text>
    </g>
    <g fill="#333" fontFamily="Liberation Sans" fontSize="5">
      <text x="1259" y="564">-08-0</text><text x="1259" y="573">= 1'-0"</text><text x="1259" y="582">CT.</text><text x="1259" y="589">uct.</text>
      <text x="1259" y="596">nber</text><text x="1259" y="609">S PLAN</text><text x="1259" y="622" fontWeight="700">mber:</text>
      <text x="1250" y="645" fontSize="15" fontWeight="700">A8</text>
    </g>
  </svg>
);

type Label = [number, number, string];
const LabelText = styled.text<{ $kind: 'piece' | 'dim' | 'total' }>`
  font-family: "DejaVu Sans", sans-serif;
  font-size: ${p => (p.$kind === 'dim' ? 10 : 9)}px;
  font-weight: ${p => (p.$kind === 'total' ? 700 : 400)};
  text-anchor: ${p => (p.$kind === 'total' ? 'end' : 'start')};
  fill: #1c2a2c;
`;
const Labels = ({ items, kind }: { items: Label[]; kind: 'piece' | 'dim' | 'total' }) => (
  <>{items.map(([x, y, t], i) => <LabelText key={i} x={x} y={y} $kind={kind}>{t}</LabelText>)}</>
);
const names1: Label[] = [
  [332, 738, 'A.1.Hall (102,103,112,129,132,134,135)'], [332, 748, '6\'6" x 46\'5-15/32"'], [624, 741, 'A.3.Exam 1 (107)'], [624, 751, '6\'6" x 12\'1"'],
  [758, 733, 'B.1.Hall (102,103,112,129,132,134,135)'], [758, 743, '6\'6" x 32\'4-13/64"'], [831, 767, 'B.3'], [727, 733, '2'], [296, 770, '2'], [878, 764, '4'], [965, 768, '5'],
  [1033, 741, 'B.6.Waiting (101)'], [1033, 751, '6\'6" x 22\'4-21/32"'], [1179, 746, 'C.1'], [1259, 747, 'D.1'],
  [1337, 741, 'E.1.Exam 6 (115)'], [1337, 751, '6\'6" x 11\'6-1/4"'], [1443, 746, 'F.1'],
];
const dims1: Label[] = [
  [292, 727, '3\'3"'], [393, 727, '3\'3"'], [231, 748, '6\'3-1/64"'], [559, 731, '2\'8-31/64"'], [573, 756, '3\'1-1/2"'], [549, 758, '4\'9"'],
  [307, 760, '3\'3"'], [360, 760, '3\'3"'], [463, 760, '3\'3"'], [516, 760, '3\'3"'], [616, 728, '2\'-3/4"'], [652, 728, '12\'1"'], [639, 766, '11\'10-1/2"'],
  [727, 755, '6\'9-1/64"'], [986, 726, '1\'6-3/4"'], [1052, 728, '22\'2-1/8"'], [984, 748, '3\'3"'], [1145, 748, '6\'6"'], [986, 768, '1\'4-51/64"'], [1052, 766, '22\'2-1/8"'],
  [1170, 730, '6-3/4"'], [1172, 762, '2\'9"'], [1174, 767, '3\'3"'], [1227, 731, '3\'3"'], [1273, 725, '1\'4-21/64"'], [1307, 745, '3\'3"'], [1227, 762, '7\'2-21/64"'],
  [1285, 765, '1\'6-1/4"'], [1331, 730, '2\'1"'], [1354, 728, '11\'6-1/4"'], [1355, 766, '11\'3-3/4"'], [1429, 733, '3\'1-1/4"'], [1427, 760, '3\'3"'],
];
const totals1: Label[] = [[713, 783, 'A 58\'4-1/16"'], [1167, 783, 'B 54\'6-21/64"'], [1328, 783, 'D 14\'9-5/32"'], [1424, 783, 'E 11\'6-1/4"']];
const names2: Label[] = [
  [286, 828, 'G.1.Waiting (101)'], [286, 838, '6\'6" x 23\'8-55/64"'], [493, 833, 'G.2'], [626, 813, '2'], [700, 813, '3'], [636, 835, 'H.1.Waiting (101)'], [636, 845, '5\'1-1/4" x 22\'2-5/32"'],
  [817, 828, 'I.1.Waiting (101)'], [817, 838, '6\'6" x 19\'9-25/64"'], [1033, 817, 'I.3'], [982, 847, 'I.2'], [1100, 833, 'J.1'], [1198, 845, 'J.2'],
  [1310, 820, 'J.3.Lounge (106)'], [1310, 830, '6\'6" x 16\'10-9/64"'], [1437, 833, 'K.1'],
];
const dims2: Label[] = [
  [298, 815, '22\'2-1/8"'], [231, 834, '6\'5-1/2"'], [398, 832, '3\'3"'], [289, 853, '19\'-27/32"'], [496, 815, '17\'7-1/2"'], [429, 838, '2\'11-13/32"'], [570, 835, '6\'6"'],
  [469, 853, '21\'10-31/64"'], [413, 856, '1\'1"'], [602, 827, '1\'9"'], [836, 815, '19\'-15/64"'], [779, 851, '2\'5-41/64"'], [803, 853, '18\'5-31/32"'],
  [952, 814, '1\'4-1/2"'], [938, 818, '2\'8-37/64"'], [941, 833, '3\'0"'], [996, 818, '2\'6"'], [1068, 826, '1\'2"'], [1003, 838, '7\'2-1/4"'], [1068, 845, '3\'3"'],
  [1098, 818, '3\'3"'], [1140, 815, '3\'7-5/32"'], [1140, 818, '2\'6-15/16"'], [1134, 832, '6\'-3/16"'], [1151, 843, '3\'5-1/4"'], [1217, 845, '3\'-3/16"'], [1268, 864, '3\'3"'],
  [1290, 821, '3\'3"'], [1399, 835, '6\'6"'], [1298, 853, '2\'-1/4"'], [1396, 853, '2\'-1/4"'], [1407, 854, '1\'11-27/64"'], [1412, 813, '1\'3-37/64"'], [1425, 821, '3\'5-11/64"'], [1424, 849, '3\'-53/64"'],
];
const totals2: Label[] = [[591, 870, 'G 43\'7-31/32"'], [776, 870, 'H 22\'2-5/32"'], [1089, 870, 'I 37\'8-25/64"'], [1420, 870, 'J 39\'9-25/32"']];

const RollOne = () => (
  <svg width="1252" height="73" viewBox="228 714 1252 73" fill="none">
    <path d="M228.500 715.500h1247v54h-1247z" fill="#fff" stroke="#6a6ac4" strokeWidth="1.400" />
    <g fill={CUT} stroke="#222">
      <path d="M228.500 717.500H287v-1.500h27v1.500h20v-1.500h43v1.500h12v-1.500h27v1.500h16v-1.500H613v53.500H578v-7.500h-39v1.500h-27v-1.500h-26v1.500h-28v-1.500h-75v1.500h-27v-1.500h-25v1.500h-27v-2.500h-40v8h-35.500z" />
      <path d="M264 764.500h67v5h-67zM613.500 716h100v53.500h-100z" />
      <path d="M714.500 722h32l-16 15.500z" />
      <path d="M727 769.500 714.500 755l16-15.500L753 715.500h229L967 754h-10l-13 15.500h-29l-5-8-6-7h-92l-10 15h-29l-6-6-6 6z" />
    </g>
    <path d="M869 755h35l6 7 5 7.500h-46z" fill="#fff" />
    <g fill={CUT} stroke="#222">
      <path d="M808 757.500h61v12h-61zM869 755.500h25l-10 10.500h-7zM955.500 758.500H982l-9 11h-9z" />
      <path d="M1168 716h37v53.500h-37zM1206 721.500h17v-1.500h27v1.500h39v-6h38v54h-44v-4h-60z" />
      <path d="M1330 716h95v53.500h-95zM1426 716h47v53.500h-47z" />
    </g>
    <path d="M714.500 716v53M1205.500 716v53M1328.500 716v53M1424.500 716v53M1473.500 716v53" stroke="#9c3030" strokeWidth="1.400" />
    <path d="M983 715.500h184v54H983v-12h-1.500v-28h1.500z" fill={CUT} stroke="#f01818" strokeWidth="1.600" />
    <path d="M228.500 769.500v-54H714M228.500 769.500H982M754 715.500h228M1168 769.500h37M1168 715.500h37M1283 769.500h190M1289 715.500h184" stroke="#22228e" strokeWidth="1.400" />
    <path d="M1476 715v55" stroke="#8a3fd0" strokeWidth="2" strokeDasharray="3 1" />
    <Labels items={names1} kind="piece" /><Labels items={dims1} kind="dim" /><Labels items={totals1} kind="total" />
  </svg>
);
const RollTwo = () => (
  <svg width="1252" height="76" viewBox="228 801 1252 76" fill="none">
    <path d="M228.500 802.500h1247v54.500h-1247z" fill="#fff" stroke="#6a6ac4" strokeWidth="1.400" />
    <g fill={CUT} stroke="#222">
      <path d="M445 802.500h146.500V857H409.500v-9H434l-8-.5V821z" /><path d="M409.500 848h16v9h-16z" />
      <path d="m593 813 10-9h59v3h5v7h-74zM670 804h59l12 11h-64l-10-1v-7h3z" />
      <path d="m888 857 24-24.500h25V815h9.500V803H1088v54zM937.500 832v9" />
      <path d="M992.500 803h95v13.500H1052v9h-59.500z" strokeWidth="1.500" /><path d="M1050 816h2v9.500h-2z" />
    </g>
    <path d="M1089.500 803h42v54h-42z" fill="#fff" />
    <g fill={CUT} stroke="#222">
      <path d="M1090 806h35.500v47H1090zM1131.500 803h63.500v30h-1v20h1v4h-63.500zM1195.500 827.500h64V852h-64z" />
      <path d="M1195.500 853h68.500v-1.500h27V853h29l3 4h-127.500z" stroke="none" /><path d="M1259 853h5v-1.500h27V853h29" />
      <path d="M1290 803h130.500v54H1393v-17h-58.500v17h-13l-19-23-5-1.500-17-16v-3z" />
      <path d="M1421.500 803h45v54h-45z" />
    </g>
    <path d="M1467 803h9v54h-9z" fill="#fff" /><path d="m1467 813 9-9M1467 835l9-11M1467 855l9-10" stroke="#999" />
    <path d="M592 802.500v28M776.500 803v31M1089.500 803v54M1421.500 803v54M1467 803v54" stroke="#9c3030" strokeWidth="1.400" />
    <g fill={CUT} stroke="#f01818" strokeWidth="1.700">
      <path d="M228.500 802.500H413v8l13 13.500v4l-19 16-2 1-11 12H228.500z" />
      <path d="M599 815h77v1.500h100.500V857H592v-26.500h7z" />
      <path d="M782.500 803H941l-53 54H776.500v-23h6z" />
    </g>
    <path d="M445 802.500h147M409 857h183M888 857h192M992 802.500h97M1131 802.500h64M1131 857h190M1290 802.500h177M1393 857h74M941 802.500h148" stroke="#22228e" strokeWidth="1.400" />
    <path d="M1476 802v55" stroke="#8a3fd0" strokeWidth="2" strokeDasharray="3 1" />
    <Labels items={names2} kind="piece" /><Labels items={dims2} kind="dim" /><Labels items={totals2} kind="total" />
  </svg>
);
const RollHead = ({ n }: { n: number }) => (
  <CutLine><b>Roll#{n} Roll Length</b> = 150'0" <b>Used Length</b> = 150'0" <b>Unused</b> = 0" <b>Cut Margin</b> = 3" Length Only</CutLine>
);

const Workspace = () => (
  <Center>
    <CanvasRow>
      <CanvasView>
        <GridCanvas />
        <ChatButton aria-label="Chat"><S w={20} h={17}><path d="M0 0h20v14h-2v3l-4-3H0z" fill="#0f7bff" /><path d="M3 4h5M10 4h7M3 7h7M12 7h5M3 10h5M10 10h7" stroke="#fff" strokeWidth="1.200" /></S></ChatButton>
      </CanvasView>
      <ScrollBar before={205} size={61} after={205} />
    </CanvasRow>
    <FloorRow>
      <FloorTabs>
        <FloorIcons><S w={7} h={4}><path d="M0 4h6L3 0z" fill="#111" /></S><Plus s={11} /><S w={4} h={7}><path d="M4 0v7L0 3.500z" fill="#111" /></S></FloorIcons>
        <FloorTab $active>Ground Floor</FloorTab><FloorTab>2nd Floor</FloorTab><FloorTab>3rd Floor</FloorTab>
      </FloorTabs>
      <Fill />
      <S w={4} h={7}><path d="M0 0v7l4-3.500z" fill="#111" /></S>
      <PageScroll><ScrollBar horizontal before={33} size={36} after={30} /></PageScroll>
      <Slider type="range" aria-label="Canvas zoom" defaultValue={43} />
    </FloorRow>
    <StatusRow>
      <span>Ready</span><Fill />
      <Drop label="Cut sheet product" value="" w={104} h={17} white />
      <StatusIcons>
        <S w={12}><path d="m1 1 5 4.500L11 1M1 6l5 4.500L11 6" stroke="#333" strokeWidth="1.200" /></S>
        <S w={11}><rect x=".5" y=".5" width="10" height="10" stroke="#222" /></S>
      </StatusIcons>
    </StatusRow>
    <CutRow>
      <CutSheets>
        <CutLine $top={1}><b>SV-1 (Johnsonite) 6'6" SY  Total Linear Length</b> = 6'6"x600'0"  <b>#Roll(s)</b> = 4  <b>Qty</b> = 433.33 SY (3,900.00 SF) (4*108.33SY/Roll)  <b>Waste</b> = 23.7%  <b>Covered Area</b> = 330.81 SY (2,977.25 SF)</CutLine>
        <RollHead n={1} />
        <RollOne />
        <RollHead n={2} />
        <RollTwo />
      </CutSheets>
      <ScrollBar before={0} size={88} after={76} />
    </CutRow>
    <CutFoot>
      <Arrow dir="left" /><Fill /><Arrow dir="right" />
      <Slider type="range" aria-label="Cut sheet zoom" defaultValue={47} />
    </CutFoot>
  </Center>
);

/* ---------- right strip ---------- */

const RightStrip = styled.aside`
  width: 28px;
  flex: none;
  display: flex;
  flex-direction: column;
  border-left: 1px solid #dcdfe3;
`;
const StripHead = styled.button`
  height: 22px;
  display: flex;
  align-items: center;
  justify-content: flex-end;
  padding-right: 5px;
  background: #fff;
  border-bottom: 1px solid #d8d8d8;
`;
const StripItem = styled.button<{ $active?: boolean }>`
  height: 24px;
  flex: none;
  display: flex;
  align-items: center;
  justify-content: center;
  border-top: 1px solid #c9ccd4;
  background: ${p => (p.$active ? '#eefdfe' : 'transparent')};
`;
const StripMore = styled.button`
  height: 25px;
  padding-left: 6px;
  border-top: 1px solid #c9ccd4;
`;
const StripIcon = ({ c, children }: { c: string; children: React.ReactNode }) => (
  <S w={19}><rect x=".5" y=".5" width="18" height="18" fill="#fff" stroke="#888" /><path d="M0 1.500h19" stroke={c} strokeWidth="3" />{children}</S>
);

/* ---------- print dialog ---------- */

const Dialog = styled.section`
  position: absolute;
  left: 405px;
  top: 157px;
  width: 854px;
  height: 514px;
  display: flex;
  flex-direction: column;
  background: #fff;
  border: 1px solid #a8a8a8;
  border-radius: 6px;
  box-shadow: 0 12px 28px rgba(0, 0, 0, 0.5), 0 0 10px rgba(0, 0, 0, 0.25);
`;
const DialogTitle = styled.header`
  height: 25px;
  flex: none;
  display: flex;
  align-items: center;
  padding-left: 6px;
  background: #ebf4f9;
  border-radius: 6px 6px 0 0;
  h2 { margin: 0; padding-left: 5px; font-size: 10px; font-weight: 400; flex: 1; }
`;
const DialogButton = styled.button`
  width: 39px;
  display: flex;
  justify-content: center;
`;
const ProfileRow = styled.div`
  height: 24px;
  flex: none;
  display: flex;
  align-items: center;
  justify-content: flex-end;
  gap: 4px;
  padding: 2px 11px 0 0;
  button + button { margin: 0 2px 0 5px; }
`;
const DialogBody = styled.div`
  height: 434px;
  flex: none;
  display: grid;
  grid-template-columns: 210px 213px 213px 1fr;
  grid-template-rows: minmax(0, 1fr);
`;
const Column = styled.div<{ $divider?: boolean }>`
  min-width: 0;
  min-height: 0;
  display: flex;
  flex-direction: column;
  ${p => p.$divider && css`border-left: 3px solid #d0d0d0;`}
`;
const PrinterColumn = styled(Column)`padding: 0 1px 0 3px;`;
const TabsColumn = styled(Column)`
  padding: 3px 2px 1px 4px;
  gap: 4px;
`;
const SettingsColumn = styled(Column)`padding: 2px 2px 0;`;
const Block = styled.div<{ $top: number }>`
  display: flex;
  flex-direction: column;
  margin-top: ${p => p.$top}px;
`;
const Line = styled.hr<{ $top: number; $dark?: boolean }>`
  width: 100%;
  margin: ${p => p.$top}px 0 0;
  border: 0;
  border-top: 1px solid ${p => (p.$dark ? '#a5a5a5' : '#d8d8d8')};
`;
const FieldName = styled.label<{ $off?: boolean }>`
  flex: 1;
  white-space: nowrap;
  color: ${p => (p.$off ? '#7c7c7c' : '#1e1e1e')};
`;
const InputRow = styled.div`
  display: flex;
  align-items: center;
  height: 18px;
  margin-bottom: 2px;
`;
const RadioRow = styled.div`
  display: flex;
  height: 16px;
  gap: 4px;
`;
const UrlRow = styled.div`
  display: flex;
  align-items: center;
  gap: 10px;
`;
const Box = styled.fieldset`
  flex: 1;
  min-width: 0;
  min-height: 0;
  margin: 0;
  padding: 0 4px;
  border: 1px solid #dbe5eb;
  border-radius: 2px;
  legend { padding: 0 4px 0 2px; margin-left: 0; height: 16px; }
`;
const FloorChecks = styled.div`
  display: grid;
  grid-auto-rows: 1fr;
  height: 50px;
  padding-left: 6px;
`;
const SheetTable = styled.table`
  width: 100%;
  border-collapse: collapse;
  th { font-weight: 400; height: 17px; padding: 0; background: #fcfcfc; border: 1px solid #e6e6e6; border-top: 0; border-left: 0; }
  th:last-child { border-right: 0; }
  td { padding: 1px 0 0 5px; }
  td:first-child { padding-left: 8px; }
  td + td { color: #22348f; }
`;
const OptionTabs = styled.div`
  height: 21px;
  flex: none;
  display: flex;
  align-items: flex-end;
`;
const OptionTab = styled.button<{ $active?: boolean; $w: number }>`
  width: ${p => p.$w}px;
  height: ${p => (p.$active ? 20 : 18)}px;
  margin-right: -1px;
  border: 1px solid #acacac;
  border-bottom: 0;
  background: ${p => (p.$active ? '#fff' : '#ececec')};
`;
const OptionPanel = styled.div`
  flex: 1;
  min-height: 0;
  display: flex;
  border: 1px solid #acacac;
  border-right: 0;
  padding: 3px 4px 3px 9px;
`;
const OptionColumn = styled(Column)`padding: 0 0 1px 1px;`;
const OptionList = styled.div`
  flex: 1;
  min-width: 0;
  overflow: hidden;
  padding-top: 1px;
`;
const HeadOption = styled.div`
  display: flex;
  align-items: center;
  justify-content: space-between;
  padding-right: 6px;
  height: 18px;
`;
const EvenRows = styled.div<{ $h: number }>`
  height: ${p => p.$h}px;
  display: grid;
  grid-auto-rows: 1fr;
  align-items: center;
`;
const SizeRows = styled.div`
  display: flex;
  flex-direction: column;
  gap: 4px;
  padding: 0 4px 3px 35px;
`;
const SizeRow = styled.div`
  display: flex;
  align-items: center;
  gap: 3px;
  height: 19px;
  color: #8a8a8a;
  ${SelectWrap} { flex: 1; }
`;
const SettingRow = styled.div`
  display: flex;
  align-items: center;
  height: 20px;
  padding-right: 3px;
`;
const SettingsInner = styled.div`padding-left: 2px;`;
const DialogFoot = styled.footer`
  flex: 1;
  display: flex;
  justify-content: center;
  align-items: flex-start;
  gap: 383px;
  padding-top: 8px;
`;
const PushButton = styled.button<{ $focus?: boolean }>`
  width: 43px;
  height: 18px;
  background: #e1e1e1;
  border: 1px solid ${p => (p.$focus ? '#2d86d6' : '#8a8a8a')};
`;
const DropList = styled.ul`
  position: absolute;
  left: 769px;
  top: 279px;
  width: 97px;
  margin: 0;
  padding: 1px 0 0;
  list-style: none;
  background: #fff;
`;
const DropItem = styled.li<{ $state?: 'hover' | 'current' }>`
  height: 17px;
  line-height: 17px;
  padding-left: 5px;
  white-space: nowrap;
  background: ${p => (p.$state === 'hover' ? '#b8e0f2' : p.$state === 'current' ? '#f0f0f0' : '#fff')};
  ${p => p.$state === 'hover' && css`border-bottom: 1px solid #3d9ad1;`}
`;
const Frame = styled.div<{ $x: number; $y: number; $w: number; $h: number }>`
  position: absolute;
  left: ${p => p.$x}px;
  top: ${p => p.$y}px;
  width: ${p => p.$w}px;
  height: ${p => p.$h}px;
  border: 3px solid ${RED};
  border-radius: 4px;
  pointer-events: none;
`;
const Badge = styled.div<{ $x: number; $y: number; $r: number }>`
  position: absolute;
  left: ${p => p.$x - p.$r}px;
  top: ${p => p.$y - p.$r}px;
  width: ${p => p.$r * 2}px;
  height: ${p => p.$r * 2}px;
  border-radius: 50%;
  background: ${RED};
  color: #fff;
  display: flex;
  align-items: center;
  justify-content: center;
  font-family: Inter, sans-serif;
  font-size: ${p => (p.$r > 16 ? 24 : 20)}px;
  font-weight: 700;
`;
const Pointer = styled.svg`
  position: absolute;
  left: 859px;
  top: 285px;
`;

const Setting = ({ id, name, value, white }: { id: string; name: string; value: string; white?: boolean }) => (
  <SettingRow><FieldName htmlFor={id}>{name}</FieldName><Drop id={id} label={name} value={value} w={73} white={white} /></SettingRow>
);

const PrintDialog = () => (
  <Dialog role="dialog" aria-label="Printers and Options">
    <DialogTitle>
      <Logo s={14} /><h2>Printers and Options</h2>
      <DialogButton aria-label="Minimize"><S w={10}><path d="M0 5.500h10" stroke="#222" /></S></DialogButton>
      <DialogButton aria-label="Maximize"><S w={10}><rect x="1" y="1" width="8" height="8" rx="1" stroke="#222" /></S></DialogButton>
      <DialogButton aria-label="Close"><S w={10}><path d="m.5.5 9 9M9.500.5l-9 9" stroke="#222" /></S></DialogButton>
    </DialogTitle>
    <ProfileRow>
      <button aria-label="Add profile"><Plus s={14} /></button>
      <button aria-label="Delete profile"><Cross c="#e8714a" /></button>
      <label htmlFor="profile">Select Print Profile</label>
      <ProfileWrap $w={93}><select id="profile" defaultValue="test print profile"><option>test print profile</option></select><Chevron /></ProfileWrap>
    </ProfileRow>
    <DialogBody>
      <PrinterColumn>
        <Block $top={3}><label htmlFor="paper">Paper Size</label></Block>
        <Block $top={2}><Drop id="paper" label="Paper Size" value={'Letter 8.5" x 11"'} /></Block>
        <Line $top={3} />
        <Block $top={2}>Orientation
          <RadioRow>
            <CheckLabel $gap={5}><RadioInput type="radio" name="orientation" />Portrait</CheckLabel>
            <CheckLabel $gap={5}><RadioInput type="radio" name="orientation" defaultChecked />Landscape</CheckLabel>
          </RadioRow>
        </Block>
        <Line $top={2} />
        <Block $top={3}><label htmlFor="printer">Select Printer</label></Block>
        <Block $top={2}><Drop id="printer" label="Select Printer" value="MeasureSquare PDF Printer" /></Block>
        <Block $top={3}><Check text="Print Tabs Worksheets Separately" /></Block>
        <Block $top={2}>
          <InputRow><FieldName htmlFor="pages">Pages to Print</FieldName><TextBox id="pages" $w={139} $h={18} /></InputRow>
          <InputRow><FieldName htmlFor="copies" $off>Copies</FieldName><TextBox id="copies" $w={139} $h={18} defaultValue="1" disabled /></InputRow>
        </Block>
        <Line $top={0} />
        <Block $top={3}>
          <Check h={18} indent={1} text="Product Fully Opaque" on />
          <Check h={18} indent={1} text="Print Pattern As Pieces" on />
          <Check h={18} indent={1} text="Print Original Image" />
          <UrlRow><Check h={18} indent={1} text="Print Web Viewer Url" on /><Tri /></UrlRow>
          <Check h={18} indent={1} text="Close Print Window Automatically" />
        </Block>
      </PrinterColumn>
      <TabsColumn $divider>
        <Box>
          <legend><Check gap={5} text="Select Tabs" on /></legend>
          <FloorChecks><Check gap={5} text="Ground Floor" on /><Check gap={5} text="2nd Floor" on /><Check gap={5} text="3rd Floor" on /></FloorChecks>
        </Box>
        <Box>
          <legend><Check gap={5} text="Select Worksheets" on /></legend>
          <SheetTable>
            <thead><tr><th>Name</th><th>Type</th><th aria-label="More" /></tr></thead>
            <tbody><tr><td width="122"><Check gap={5} text="Proposal" on /></td><td width="51">Proposal</td><td /></tr></tbody>
          </SheetTable>
        </Box>
      </TabsColumn>
      <OptionColumn $divider>
        <OptionTabs><OptionTab $active $w={50}>Options</OptionTab><OptionTab $w={31}>Misc</OptionTab><OptionTab $w={35}>Form</OptionTab></OptionTabs>
        <OptionPanel>
          <OptionList>
            <HeadOption><Check gap={5} text="Summary" on /><span>↓</span></HeadOption>
            <EvenRows $h={166}>
              <Check gap={5} indent={17} text="Customer and Job Site" on />
              <Check gap={5} indent={17} text="Project Summary" on />
              <Check gap={5} indent={17} text="Room List" on />
              <Check gap={5} indent={17} text="Product Usage List" />
              <Check gap={5} indent={17} text="Cut Sheet" on />
              <Check gap={5} indent={35} text="Roll Cut List" on />
              <Check gap={5} indent={35} text="Room Cut List" on />
              <Check gap={5} indent={35} text="Cut Sheet View" on />
              <Check gap={5} indent={17} text="Product Usage Add-up" />
              <Check gap={5} indent={17} text="Product Usage By Room" />
            </EvenRows>
            <HeadOption><Check gap={5} text="Diagram" /><span>↑ ↓</span></HeadOption>
            <EvenRows $h={34}>
              <Check gap={5} indent={17} text="Floor Plan" on off />
              <Check gap={5} indent={17} text="Room Detail" on off />
            </EvenRows>
            <SizeRows>
              <SizeRow>Width<Drop label="Width" value="100%" off /></SizeRow>
              <SizeRow>Height<Drop label="Height" value="100%" off /></SizeRow>
            </SizeRows>
            <EvenRows $h={99}>
              <Check gap={5} indent={35} text="Room Detail Wall" on off />
              <Check gap={5} indent={52} text="Print Wall Individually" on off />
              <Check gap={5} indent={70} text="Auto Width" off />
              <Check gap={5} indent={35} text="Room Detail HtmlForm" on off />
              <Check gap={5} indent={35} text="Room Detail Photo" off />
              <Check gap={5} indent={17} text="3D View" off />
            </EvenRows>
            <HeadOption><Check gap={5} text="Forms" /><span>↑</span></HeadOption>
            <HeadOption>Proposal</HeadOption>
          </OptionList>
          <ScrollBar before={0} size={254} after={123} />
        </OptionPanel>
      </OptionColumn>
      <SettingsColumn $divider>
        <Box>
          <legend>Settings</legend>
          <SettingsInner>
            <Block $top={1}><Setting id="lang" name="Language" value="Default" /></Block>
            <Block $top={4}><Check gap={5} text="Merge Pages If Possible" on /><Check gap={5} text="Show Page Title" /></Block>
            <Line $top={2} $dark />
            <Block $top={6}><Setting id="dscale" name="Diagram Scale Type" value="By PrintScale" /></Block>
            <Block $top={3}><Setting id="bscale" name="Select Blueprint Scale" value={'1/8" = 1\'-0"'} white /></Block>
            <Block $top={2}>
              <Check indent={1} gap={5} text="Ignore Empty Image Area" /><Check indent={1} gap={5} text="Print Current View" /><Check indent={1} gap={5} text="Diagram without Margin" />
            </Block>
            <Block $top={2}><Setting id="legendtype" name="Wall Detail Legend" value="None" /></Block>
            <Block $top={11}><Setting id="cutscale" name="CutSheet Scale Type" value="By Full Roll Length" /></Block>
            <Line $top={4} />
            <Block $top={3}><Check indent={1} gap={5} text="Amount Subtotal in Footer" /></Block>
            <Block $top={2}>Amount Subtotal Name</Block>
            <Block $top={1}><Check indent={1} gap={5} text="Sales+Tax Subtotal in Footer" on /></Block>
            <Block $top={1}><SettingRow><FieldName htmlFor="taxname">Sales+Tax Subtotal Name</FieldName><TextBox id="taxname" $w={73} defaultValue="unit total:" /></SettingRow></Block>
          </SettingsInner>
        </Box>
      </SettingsColumn>
    </DialogBody>
    <DialogFoot><PushButton $focus>OK</PushButton><PushButton>Cancel</PushButton></DialogFoot>

    <DropList role="listbox" aria-label="CutSheet Scale Type">
      <DropItem $state="hover">By Zoom</DropItem><DropItem>By PrintScale</DropItem><DropItem $state="current">By Full Roll Length</DropItem>
    </DropList>
    <Frame $x={448} $y={158} $w={120} $h={73} />
    <Frame $x={642} $y={254} $w={206} $h={27} />
    <Frame $x={767} $y={278} $w={100} $h={56} />
    <Frame $x={184} $y={483} $w={59} $h={36} />
    <Pointer width="9" height="14" viewBox="0 0 9 14"><path d="M.5.500v11l3-2.500 1.500 4 2-1-1.500-3.500H8.500z" fill="#fff" stroke="#222" /></Pointer>
    <Badge $x={424} $y={159} $r={15}>3</Badge>
    <Badge $x={859} $y={240} $r={15}>4</Badge>
    <Badge $x={884} $y={344} $r={15}>5</Badge>
    <Badge $x={266} $y={488} $r={18}>6</Badge>
  </Dialog>
);

/* ---------- page ---------- */

export default function App() {
  return (
    <Page>
      <GlobalStyle />
      <Behind>
        <BehindPart $h={35} $c="#dfe5ec" /><BehindPart $h={40} $c="#fff" /><BehindPart $h={35} $c="#34495e" /><BehindPart $h={59} $c="#f6f6f6" />
        <BehindPart $c="#8b8885" $round /><BehindPart $h={124} $c="#f6f6f6" /><BehindPart $h={6} $c="#d0e6ec" />
      </Behind>
      <AppWindow>
        <TitleBar>
          <Logo /><TitleText>*Cave Creek Assignment -MeasureSquare 8 (Build10437)</TitleText>
          <WinButton aria-label="Minimize"><S w={8}><path d="M1 6.500h5" stroke="#111" strokeWidth="2" /></S></WinButton>
          <WinButton aria-label="Restore"><S w={9}><path d="M3 1.500h5v4.500H3z" stroke="#111" /><path d="M3 .8h5.500" stroke="#111" strokeWidth="1.500" /><path d="M1 3.500h5V8H1z" fill="#d2d2d2" stroke="#111" /><path d="M.5 3.500h6" stroke="#111" strokeWidth="1.500" /></S></WinButton>
          <WinButton aria-label="Close"><S w={8}><path d="m.5.5 7 7M7.500.5l-7 7" stroke="#111" strokeWidth="1.600" /></S></WinButton>
        </TitleBar>
        <TabBar>
          <FileButton>File <Tri c="#fff" /></FileButton>
          <MenuTab $w={78}>Project Info</MenuTab><MenuTab $w={52} $active>Takeoff</MenuTab><MenuTab $w={74}>Worksheet</MenuTab><MenuTab $w={48}>Cloud</MenuTab>
        </TabBar>
        <Ribbon>
          <RibbonGroup t="Import" w={123} pad={5}><Lg n="import" t="Import" arrow /><Lg n="scale" t="Scale" /><Lg n="disto" t="Disto" /></RibbonGroup>
          <RibbonGroup t="Room" w={155} pad={1}>
            <Lg n="draw" t="Draw" arrow />
            <LargeButton>{Big.rect}<LargeLabel>Draw</LargeLabel><TwoLine>Rect <Tri /></TwoLine></LargeButton>
            <SmallColumn><Sm n="door" t="Door" arrow /><Sm n="window" t="Window" arrow /><Sm n="stair" t="Stairway" arrow /></SmallColumn>
          </RibbonGroup>
          <RibbonGroup t="Shape" w={193} pad={4}>
            <Lg n="divider" t="Divider" arrow />
            <SmallColumn $w={74}><Sm n="elev" t="Elevation" /><Sm n="dim" t="Dimension" /><Sm n="seg" t="Segment" /></SmallColumn>
            <SmallColumn><Sm n="note" t="Note" arrow /><Sm n="legends" t="Legends" arrow /><Sm n="rmedit" t="RmEdit" arrow near /></SmallColumn>
          </RibbonGroup>
          <RibbonGroup t="Markup" w={137} pad={2}>
            <Lg n="hgl" t="HGL" arrow /><Lg n="stamp" t="Stamp" arrow />
            <SmallColumn><Sm n="line" t="Line" arrow /><Sm n="rrect" t="Rect" arrow /><Sm n="poly" t="Poly" arrow /></SmallColumn>
          </RibbonGroup>
          <RibbonGroup t="Estimate" w={168} pad={7}>
            <Lg n="estimate" t="Estimate" arrow />
            <EstimateColumn>
              <SwatchWrap $h={21}><select aria-label="Active product" defaultValue="SV-1 (Johnsonite)"><option>SV-1 (Johnsonite)</option></select><Chevron /></SwatchWrap>
              <EstimateTools><PlayTri /><PlayTri plus /><PlayTri plus /><S w={18} vb="0 0 24 27"><path d={GEAR} stroke="#6fa1d6" strokeWidth="1.400" /><circle cx="12" cy="13" r="4" stroke="#6fa1d6" strokeWidth="1.400" /></S><Tri /></EstimateTools>
            </EstimateColumn>
          </RibbonGroup>
          <RibbonGroup t="Layout, Seam & Tile" w={181} pad={4}>
            <Lg n="relayout" t="ReLayout" w={44} /><Lg n="tseam" t="T-Seam" w={44} arrow />
            <SmallColumn><Sm n="lock" t="LockSeam" arrow off /><Sm n="pattern" t="PatternPos" arrow /><Sm n="layout" t="LayoutDir" arrow /></SmallColumn>
          </RibbonGroup>
          <RibbonGroup t="Zoom" w={90} pad={3}>
            <Lg n="zoom" t="Zoom" arrow />
            <SmallColumn><Sm n="zin" t="In" /><Sm n="zout" t="Out" /><Drop label="Zoom level" value="57%" w={47} white /></SmallColumn>
          </RibbonGroup>
          <RibbonGroup t="View" w={115} pad={3}>
            <Lg n="pan" t="Pan" />
            <SmallColumn><Sm n="vwall" t="View Wall" /><Sm n="cube" t="View3D" arrow /><Sm n="gears" t="Options" arrow near /></SmallColumn>
          </RibbonGroup>
          <RibbonGroup t="Edit" w={209} pad={2}>
            <Lg n="undo" t="Undo" off /><Lg n="redo" t="Redo" off /><Lg n="search" t="Search" arrow /><Lg n="paste" t="Paste" off />
            <SmallColumn><Sm n="copy" t="Copy" /><Sm n="cut" t="Cut" /><Sm n="del" t="Delete" off /></SmallColumn>
          </RibbonGroup>
          <RibbonGroup t="Shape Edit" w={177} pad={3}>
            <Lg n="rotate" t="Rotate" arrow />
            <SmallColumn $w={55}><Sm n="sscale" t="Scale" /><Sm n="arc" t="Set Arc" /><Sm n="wall" t="Wall" arrow near /></SmallColumn>
            <SmallColumn><Sm n="room" t="Room" /><Sm n="seam" t="Seam" /><Sm n="all" t="Select All" arrow /></SmallColumn>
          </RibbonGroup>
        </Ribbon>
        <QuickBar>
          <S w={27}><path d="M4 1.500h14l5.500 6V25.500H4zM18 1.500v6h5.500" fill="#fff" stroke="#777" strokeWidth="1.200" /></S>
          <S w={27}><path d="M1 22V6h8l2 3h11v3H6z" fill="#d99c3d" /><path d="M6 11h21l-5 12H1z" fill="#e8b057" /></S>
          <S w={27}><path d="M2 2h23v23H2z" fill="#8c4aa0" /><path d="M8 2h12v9H8z" fill="#eee" /><path d="M14 3h3v6h-3z" fill="#555" /><path d="M6 15h15v10H6z" fill="#fff" /><path d="M8 18h11M8 21h11" stroke="#aaa" /></S>
          <S w={27} h={26}><path d="M3 8v12h11M4 19C8 11 15 5 21 9c5 4 2 10-1 12" stroke="#cdcdcd" strokeWidth="3" /></S>
          <S w={27} h={26}><path d="M24 8v12H13M23 19C19 11 12 5 6 9c-5 4-2 10 1 12" stroke="#cdcdcd" strokeWidth="3" /></S>
          <S w={27}><path d="M2 4v19c0 2 5 3 10 3M24 4v9" stroke={BLUE} strokeWidth="1.300" /><ellipse cx="13" cy="4" rx="11" ry="3" stroke={BLUE} strokeWidth="1.300" /><rect x="14" y="14" width="12" height="12" fill="#fff" stroke="#d99c3d" strokeWidth="1.400" /><path d="M17 17v6M19.500 17v6M22 17v6M24 17v6" stroke="#666" /></S>
          <S w={27} vb="-1 0 26 26"><path d={GEAR} stroke={BLUE} strokeWidth="1.300" /><circle cx="12" cy="13" r="4" stroke={BLUE} strokeWidth="1.300" /></S>
          <HelpMenu aria-label="Help">
            <S w={27}><circle cx="13.500" cy="13.500" r="12.500" stroke={BLUE} strokeWidth="1.300" /><path d="M9.500 10.500c0-5.500 8-5.500 8 0 0 3-4 3-4 6.500" stroke={BLUE} strokeWidth="2.600" /><circle cx="13.500" cy="20.500" r="1.700" fill={BLUE} /></S>
            <Tri />
          </HelpMenu>
          <S w={27}><path d="M7 21.500a5.500 5.500 0 0 1-.5-11 7 7 0 0 1 13-1.500 6 6 0 0 1 1.500 12.500z" stroke={BLUE} strokeWidth="1.300" /></S>
        </QuickBar>
        <Main>
          <ProductPanel />
          <Workspace />
          <RightStrip>
            <StripHead aria-label="Collapse"><S w={8}><path d="M4 1.500 1.500 4 4 6.500M7 1.500 4.500 4 7 6.500" stroke="#333" /></S></StripHead>
            <Fill />
            <Grip />
            <StripItem $active aria-label="Details"><StripIcon c="#8c4aa0"><path d="M2 7h8v8H2z" fill="#8c4aa0" /><path d="M11.500 8h5M11.500 11h5M11.500 14h5" stroke="#888" /></StripIcon></StripItem>
            <StripItem aria-label="Run"><StripIcon c="#3fa37a"><path d="m5 6 9 4.500L5 15z" stroke={BLUE} strokeWidth="1.300" /></StripIcon></StripItem>
            <StripItem aria-label="Document"><StripIcon c={BLUE}><path d="M5.500 6h8v9h-8zM7.500 8.500h4" stroke={BLUE} /></StripIcon></StripItem>
            <StripItem aria-label="Layout"><StripIcon c="#e8b057"><path d="M3.500 5.500h12v10h-12z" stroke="#999" /><path d="M4 14.500h5" stroke="#3fa3c7" strokeWidth="1.500" /></StripIcon></StripItem>
            <StripMore aria-label="More"><Tri c="#555" /></StripMore>
          </RightStrip>
        </Main>
        <BottomEdge />
      </AppWindow>
      <PrintDialog />
    </Page>
  );
}
